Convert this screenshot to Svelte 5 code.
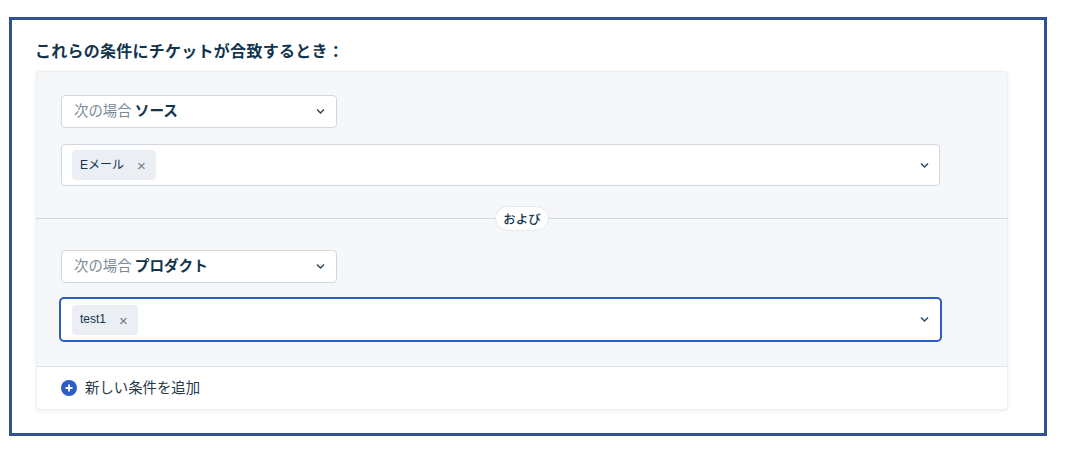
<script>
  const chevron = "M1 1.5 L4.5 5 L8 1.5";
</script>

<div class="frame">
  <h2 class="title">これらの条件にチケットが合致するとき：</h2>
  <section class="card">
    <div class="group first">
      <div class="select">
        <span class="label"><span class="muted">次の場合</span> <b>ソース</b></span>
        <svg class="chev" width="9" height="7" viewBox="0 0 9 7"><path d={chevron} /></svg>
      </div>
      <div class="multi">
        <span class="tag"><span class="tag-text">Eメール</span><span class="x">×</span></span>
        <svg class="chev" width="9" height="7" viewBox="0 0 9 7"><path d={chevron} /></svg>
      </div>
    </div>
    <div class="divider"><span class="pill">および</span></div>
    <div class="group second">
      <div class="select">
        <span class="label"><span class="muted">次の場合</span> <b>プロダクト</b></span>
        <svg class="chev" width="9" height="7" viewBox="0 0 9 7"><path d={chevron} /></svg>
      </div>
      <div class="multi focused">
        <span class="tag"><span class="tag-text">test1</span><span class="x">×</span></span>
        <svg class="chev" width="9" height="7" viewBox="0 0 9 7"><path d={chevron} /></svg>
      </div>
    </div>
    <div class="footer">
      <svg width="16" height="16" viewBox="0 0 16 16">
        <circle cx="8" cy="8" r="8" fill="#2c5cc5" />
        <path d="M8 4.5v7M4.5 8h7" stroke="#fff" stroke-width="1.8" />
      </svg>
      <span class="add">新しい条件を追加</span>
    </div>
  </section>
</div>

<style>
  :global(body) {
    margin: 0;
    background: #fff;
    font-family: "Noto Sans CJK JP", "Liberation Sans", sans-serif;
  }
  .frame {
    box-sizing: border-box;
    width: 1038px;
    height: 419px;
    margin: 17px 0 0 9px;
    border: 3px solid #2f5290;
    padding: 0 36px 0 24px;
  }
  .title {
    margin: 0 0 0 -1px;
    height: 51px;
    line-height: 60px;
    font-size: 16px;
    letter-spacing: 0.26px;
    font-weight: 600;
    color: #12344d;
    white-space: nowrap;
  }
  .card {
    width: 972px;
    height: 339px;
    box-sizing: border-box;
    background: #f5f7f9;
    border: 1px solid #ebeff3;
    border-radius: 4px;
    box-shadow: 0 1px 4px rgba(24, 50, 71, 0.08);
    display: flex;
    flex-direction: column;
  }
  .group {
    display: flex;
    flex-direction: column;
    align-items: flex-start;
    padding-left: 24px;
  }
  .first { height: 146px; padding-top: 23px; box-sizing: border-box; }
  .second { height: 147px; padding-top: 31px; box-sizing: border-box; }
  .select, .multi {
    box-sizing: border-box;
    display: flex;
    align-items: center;
    justify-content: space-between;
    background: #fff;
    border: 1px solid #cfd7df;
    border-radius: 4px;
    color: #12344d;
  }
  .select {
    width: 276px;
    height: 33px;
    padding: 0 11px 0 12px;
    font-size: 14.4px;
  }
  .label { margin-top: -4px; }
  .first .multi { margin-top: 16px; }
  .multi {
    width: 879px;
    height: 42px;
    padding: 0 10px 0 10px;
  }
  .second .multi.focused {
    width: 883px;
    height: 45px;
    margin-top: 14px;
    margin-left: -2px;
    border: 2px solid #2c5cc5;
    border-radius: 5px;
    padding: 0 11px 0 11px;
  }
  .muted { color: #7b8a97; }
  .label b { font-weight: 700; font-size: 14.6px; color: #12344d; }
  .tag {
    display: inline-flex;
    align-items: center;
    height: 30px;
    box-sizing: border-box;
    padding: 0 10px 0 8px;
    background: #ebeff3;
    border-radius: 4px;
    font-size: 12px;
    font-family: "Liberation Sans", "Noto Sans CJK JP", sans-serif;
    color: #12344d;
  }
  .tag-text { position: relative; top: -2px; }
  .focused .tag-text { top: -1px; }
  .x { margin-left: 13px; font-size: 15px; line-height: 1; color: #6f7c87; }
  .focused .x { margin-top: 2px; }
  .chev { flex: none; }
  .chev path { fill: none; stroke: #2c4a61; stroke-width: 1.5; }
  .divider {
    height: 0;
    position: relative;
    border-top: 1px solid #cfd7df;
    margin-left: -1px;
    margin-right: -1px;
  }
  .pill {
    position: absolute;
    left: 459px;
    top: -13px;
    width: 54px;
    height: 25px;
    box-sizing: border-box;
    display: flex;
    align-items: center;
    justify-content: center;
    background: #fff;
    border: 1px solid #e4e9ee;
    border-radius: 13px;
    font-size: 12.5px;
    font-weight: 500;
    color: #12344d;
  }
  .footer {
    flex: 1;
    display: flex;
    align-items: center;
    gap: 8px;
    padding-left: 24px;
    background: #fff;
    border-top: 1px solid #dde3e9;
    border-radius: 0 0 4px 4px;
    font-size: 14.4px;
    color: #283a48;
  }
  .footer svg { margin-top: -1px; }
  .add { margin-top: -3px; }
</style>
